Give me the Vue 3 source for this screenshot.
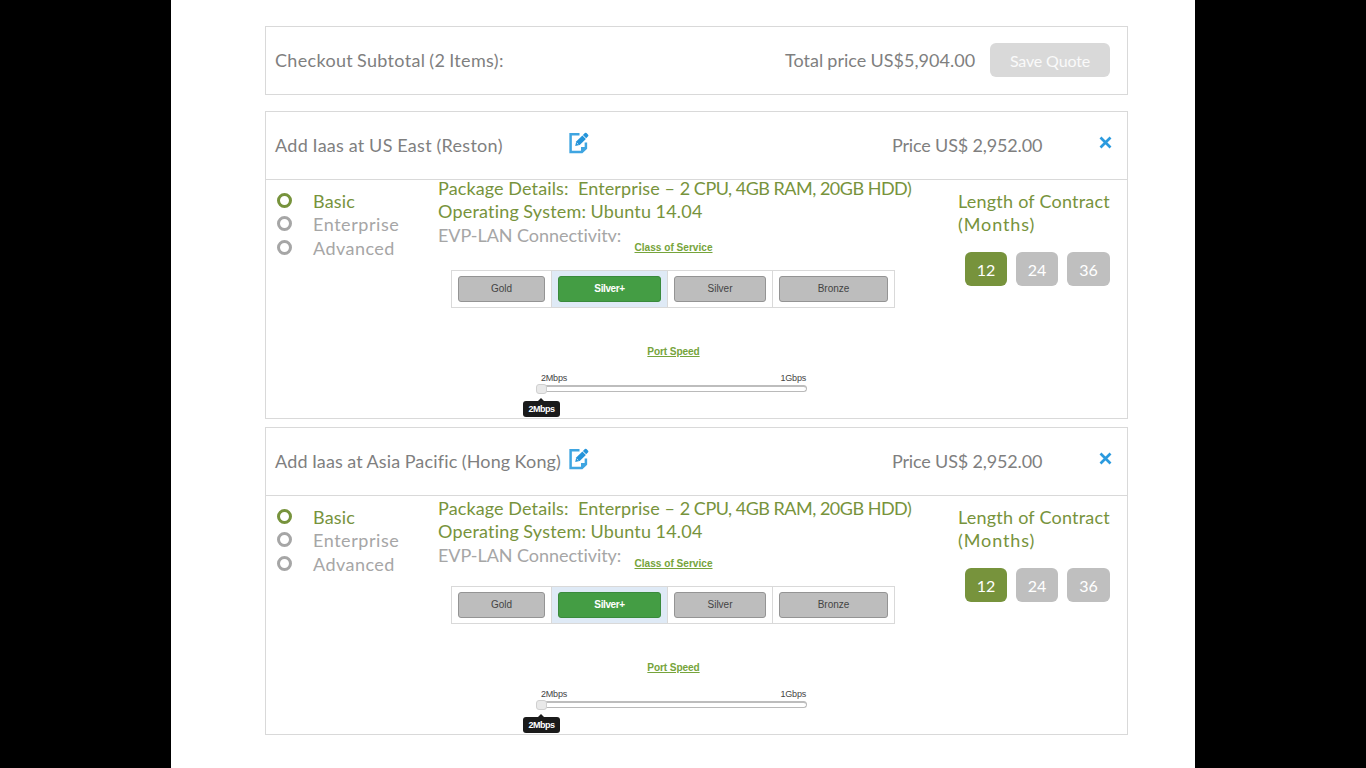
<script setup>
const items = [
  { title: 'Add Iaas at US East (Reston)', fit: 'fit-reston', variant: 'first' },
  { title: 'Add Iaas at Asia Pacific (Hong Kong)', fit: 'fit-hongkong', variant: 'second' },
]
const plans = ['Basic', 'Enterprise', 'Advanced']
const classes = ['Gold', 'Silver+', 'Silver', 'Bronze']
const months = [12, 24, 36]
</script>

<template>
  <main class="page">
    <section class="card summary">
      <span class="subtotal">Checkout Subtotal (2 Items):</span>
      <span class="total">Total price US$5,904.00</span>
      <button class="save">Save Quote</button>
    </section>

    <section v-for="item in items" :key="item.title" class="card item" :class="item.variant">
      <header class="head">
        <span class="title" :class="item.fit">{{ item.title }}</span>
        <svg class="edit" width="22" height="24" viewBox="0 0 22 24">
          <path d="M11.5 3.3H2.6v17.6h11.3l4-3.8v-5.6" fill="none" stroke="#3fa5e1" stroke-width="2.5" />
          <path d="M13 22v-6h6.2z" fill="#3fa5e1" />
          <path d="M7.2 15l1-4.5 6.2-6 3.5 3.5-6.2 6z" fill="#2494da" />
          <path d="M14.9 4l2-2q.8-.7 1.6 0l1.6 1.7q.7.8 0 1.5l-1.9 2z" fill="#2494da" />
          <path d="M8.7 11.8l1.6 1.6" stroke="#fff" stroke-width=".7" />
        </svg>
        <span class="price">Price US$ 2,952.00</span>
        <svg class="close" width="13" height="13" viewBox="0 0 13 13">
          <path d="M1.5 1.5l10 10M11.5 1.5l-10 10" stroke="#2b9ade" stroke-width="2.7" />
        </svg>
      </header>

      <div class="body">
        <ul class="plans">
          <li v-for="plan in plans" :key="plan" :class="plan.toLowerCase()">
            <i class="ring"></i><span>{{ plan }}</span>
          </li>
        </ul>

        <div class="middle">
          <div class="details">
            <p class="package">Package Details:&nbsp; Enterprise – <span class="spec">2 CPU, 4GB RAM, 20GB HDD)</span></p>
            <p class="system">Operating System: Ubuntu 14.04</p>
            <p class="evp">EVP-LAN Connectivity:</p>
          </div>
          <div class="config">
            <h4>Class of Service</h4>
            <div class="classes">
              <div v-for="c in classes" :key="c" class="cell" :class="{ on: c === 'Silver+' }">
                <button>{{ c }}</button>
              </div>
            </div>
            <h4 class="port">Port Speed</h4>
            <div class="slider">
              <div class="ends"><span>2Mbps</span><span>1Gbps</span></div>
              <div class="track"><i class="thumb"></i></div>
              <div class="tip">2Mbps</div>
            </div>
          </div>
        </div>

        <div class="contract">
          <p class="length">Length of Contract</p>
          <p class="unit">(Months)</p>
          <div class="months">
            <button v-for="m in months" :key="m" :class="{ on: m === 12 }">{{ m }}</button>
          </div>
        </div>
      </div>
    </section>
  </main>
</template>

<style>
html, body { background: #000; overflow: hidden; }
</style>

<style scoped>
* { box-sizing: border-box; margin: 0; padding: 0; }
button { border: 0; font: inherit; color: inherit; display: block; }
.page {
  width: 1024px; height: 768px; margin-left: 171px; padding: 26px 67px 0 94px;
  background: #fff; color: #7f7f7f; font: 18px/23px Lato, "Open Sans", sans-serif;
  white-space: nowrap; font-variant-ligatures: none;
}
.card { border: 1px solid #d9d9d9; width: 863px; }
.summary { height: 69px; display: flex; align-items: center; padding: 0 17px 0 9px; }
.subtotal { flex: 1; letter-spacing: .32px; word-spacing: -.9px; }
.total { width: 205px; letter-spacing: .02px; word-spacing: -.5px; }
.save {
  width: 120px; height: 34px; border-radius: 6px; background: #d9d9d9; color: #fafafa;
  font-size: 16px; text-align: center; letter-spacing: -.15px; margin-top: -1px;
}
.item { height: 308px; }
.first { margin-top: 16px; }
.second { margin-top: 8px; }
.head { height: 68px; border-bottom: 1px solid #d9d9d9; display: flex; align-items: center; padding-left: 9px; }
.title { width: 293px; }
.fit-reston { letter-spacing: .3px; word-spacing: -.4px; }
.fit-hongkong { letter-spacing: .16px; word-spacing: -.5px; }
.edit { flex: none; margin-top: -5px; }
.price { width: 207px; margin-left: 302px; letter-spacing: -.16px; }
.close { flex: none; margin-top: -6px; }
.body { display: grid; grid-template-columns: 172px 520px 1fr; height: 238px; }
.plans { list-style: none; padding: 10px 0 0 11px; color: #a6a6a6; }
.plans li { display: flex; align-items: center; height: 23px; }
.ring { width: 15px; height: 15px; border: 3px solid #a6a6a6; border-radius: 50%; margin: -2px 21px 0 0; }
.basic { color: #77933c; letter-spacing: .2px; }
.basic .ring { border-color: #77933c; }
.enterprise { letter-spacing: .55px; }
.plans .advanced { letter-spacing: .45px; height: 25px; }
.details { display: flow-root; height: 62px; color: #77933c; }
.package { margin-top: -3px; letter-spacing: .11px; }
.second .package { margin-top: 1px; }
.spec { letter-spacing: -.5px; }
.system { letter-spacing: .2px; word-spacing: -.5px; }
.evp { color: #a6a6a6; line-height: 24px; letter-spacing: -.05px; }
.first .evp { height: 19px; overflow: hidden; }
.config { width: 444px; margin-left: 13px; font: 10px/12px "Liberation Sans", Arial, sans-serif; color: #444; }
h4 { font-size: 10.1px; line-height: 12px; text-align: center; text-decoration: underline; color: #76a43b; padding-left: 1px; }
.classes {
  margin-top: 16px; height: 38px; display: grid; grid-template-columns: 100px 116px 105px 1fr;
  border: 1px solid #d9d9d9;
}
.cell { padding: 5px 6px; border-right: 1px solid #d9d9d9; }
.cell:last-child { border-right: 0; }
.cell.on { background: #dfeaf6; }
.cell button {
  width: 100%; height: 26px; border: 1px solid #949494; border-radius: 3px;
  background: #bdbdbd; color: #444; text-align: center;
}
.cell.on button { background: #449d44; border-color: #398a3c; color: #fff; font-weight: bold; letter-spacing: -.4px; }
.port { margin-top: 38px; letter-spacing: -.1px; }
.slider { width: 266px; margin: 14px 0 0 90px; font-size: 9px; letter-spacing: -.2px; }
.ends { display: flex; justify-content: space-between; height: 13px; }
.ends span:last-child { margin-right: 1px; }
.track { height: 7px; border: 1px solid #bababa; border-top: 2px solid #bdbdbd; border-radius: 4px; position: relative; }
.thumb {
  position: absolute; left: -6px; top: -3px; width: 11px; height: 10px;
  border: 1px solid #d0d0d0; border-radius: 3px; background: #e9e9e9;
}
.tip {
  position: relative; width: 37px; height: 16px; margin: 9px 0 0 -18px; border-radius: 3px;
  background: #1a1a1a; color: #fff; text-align: center; font-weight: bold; line-height: 16px; letter-spacing: -.5px;
}
.tip::before {
  content: ""; position: absolute; left: 15px; top: -3px;
  border: 3.5px solid transparent; border-top: 0; border-bottom: 3px solid #1a1a1a;
}
.contract { color: #77933c; padding-top: 10px; }
.length { letter-spacing: .22px; }
.unit { letter-spacing: .9px; }
.months { display: flex; gap: 9px; margin: 16px 0 0 7px; }
.months button {
  height: 34px; width: 42px; border-radius: 6px; background: #bfbfbf; color: #fff;
  font-size: 16px; text-align: center;
}
.months button:last-child { width: 43px; }
.months .on { background: #77933c; }
</style>
